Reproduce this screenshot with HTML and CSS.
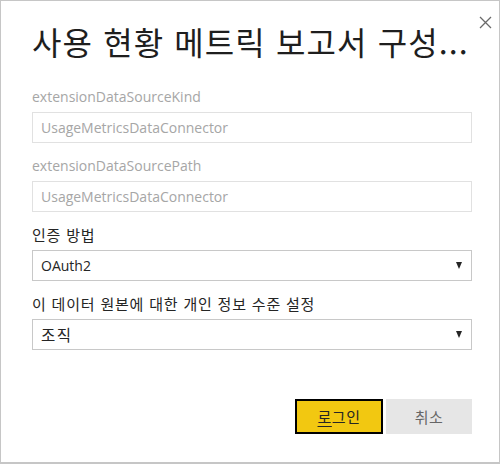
FILE: index.html
```html
<!DOCTYPE html>
<html lang="ko">
<head>
<meta charset="utf-8">
<link rel="stylesheet" href="styles.css">
</head>
<body>
<div class="dialog">
  <button class="close" aria-label="닫기">
    <svg width="13" height="13" viewBox="0 0 13 13"><path d="M1 1L12 12M12 1L1 12" stroke="#6a6a6a" stroke-width="1.3" fill="none"/></svg>
  </button>
  <h1 class="title">사용 현황 메트릭 보고서 구성...</h1>
  <div class="field">
    <div class="label disabled">extensionDataSourceKind</div>
    <div class="box disabled">UsageMetricsDataConnector</div>
  </div>
  <div class="field">
    <div class="label disabled">extensionDataSourcePath</div>
    <div class="box disabled">UsageMetricsDataConnector</div>
  </div>
  <div class="field">
    <div class="label ko">인증 방법</div>
    <div class="box select"><span>OAuth2</span><span class="arrow"></span></div>
  </div>
  <div class="field">
    <div class="label ko">이 데이터 원본에 대한 개인 정보 수준 설정</div>
    <div class="box select"><span class="ko">조직</span><span class="arrow"></span></div>
  </div>
  <div class="actions">
    <button class="btn primary"><u>로</u>그인</button>
    <button class="btn secondary">취소</button>
  </div>
</div>
</body>
</html>
```
FILE: styles.css
```css
* { box-sizing: border-box; }
html, body { margin: 0; padding: 0; background: #fff; }
body {
  font-family: "Open Sans", "Noto Sans CJK KR", sans-serif;
  color: #252525;
}
.dialog {
  position: relative;
  width: 500px;
  height: 464px;
  border: 1px solid #c6c6c6;
  border-bottom-width: 2px;
  padding: 20px 27px 0 31px;
}
.close {
  position: absolute;
  top: 15px;
  right: 7px;
  border: 0;
  background: none;
  padding: 0;
  width: 13px;
  height: 13px;
  line-height: 0;
}
.title {
  margin: 0 0 26px 0;
  font-family: "Noto Sans CJK KR", sans-serif;
  font-weight: 400;
  font-size: 32px;
  line-height: 40px;
  color: #1e1e1e;
  white-space: nowrap;
  letter-spacing: 1.1px;
}
.field { margin-bottom: 13px; }
.label {
  font-size: 14px;
  line-height: 20px;
  margin-bottom: 5px;
  color: #252525;
  font-family: "Open Sans", "Noto Sans CJK KR", sans-serif;
}
.label.disabled { color: #a6a6a6; }
.ko {
  font-family: "Noto Sans CJK KR", sans-serif;
  font-size: 15px;
  letter-spacing: 0.8px;
}
.select .ko { font-size: 15.5px; letter-spacing: 1.5px; }
.box {
  height: 31px;
  border: 1px solid #c8c8c8;
  padding: 0 8px;
  font-size: 14px;
  line-height: 29px;
  color: #252525;
}
.box.disabled {
  border-color: #e1e1e1;
  color: #a6a6a6;
}
.select {
  display: flex;
  justify-content: space-between;
  align-items: center;
  padding-right: 9px;
}
.arrow {
  width: 0;
  height: 0;
  border-left: 3.5px solid transparent;
  border-right: 3.5px solid transparent;
  border-top: 7px solid #252525;
}
.actions {
  display: flex;
  justify-content: flex-end;
  gap: 3px;
  margin-top: 49px;
}
.btn {
  height: 35px;
  font-family: "Noto Sans CJK KR", sans-serif;
  font-size: 15px;
  letter-spacing: 0.5px;
  cursor: pointer;
}
.btn u { text-decoration-thickness: 1px; text-underline-offset: 3px; }
.primary {
  width: 88px;
  background: #f2c811;
  border: 2px solid #000;
  box-shadow: inset 0 0 0 1px #f2c811;
  color: #252525;
}
.secondary {
  width: 86px;
  background: #e6e6e6;
  border: 0;
  color: #666;
}
```
